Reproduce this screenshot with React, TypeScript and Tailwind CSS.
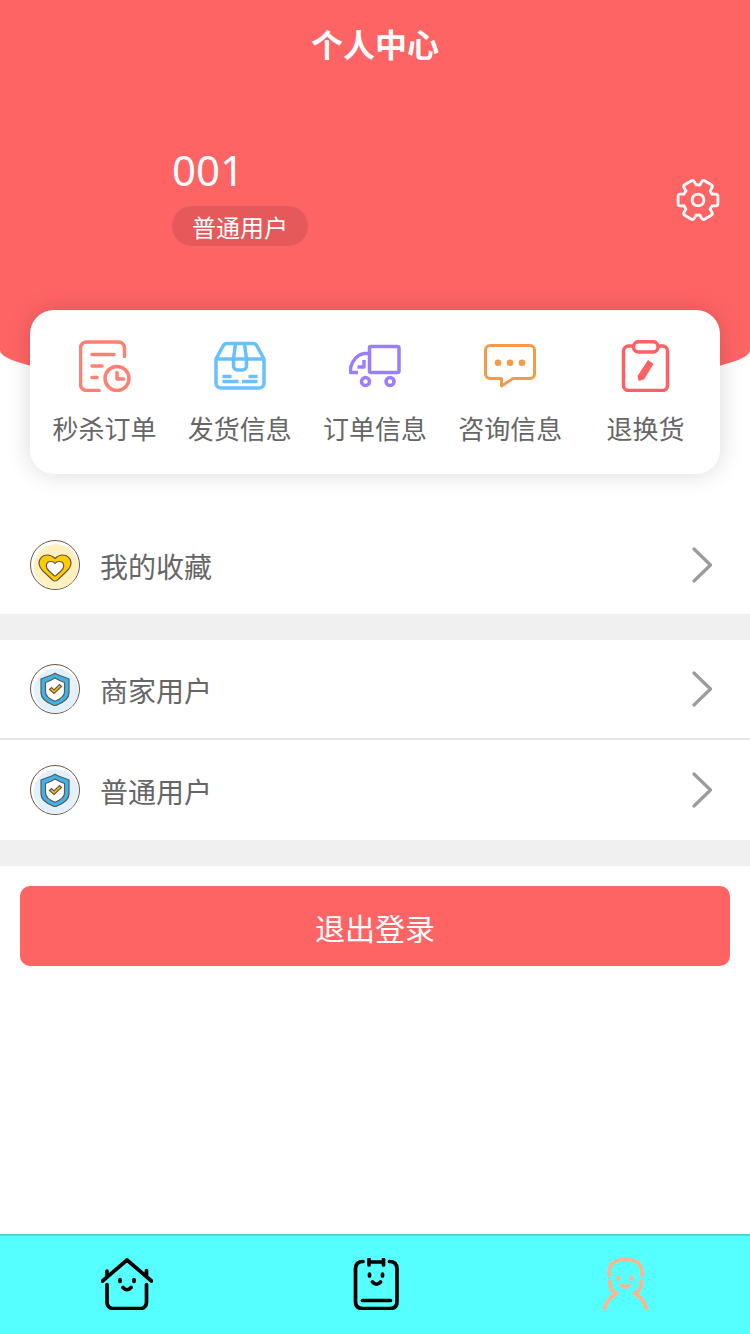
import type { ReactNode } from 'react'

interface Shortcut {
  label: string
  icon: ReactNode
}

const gearAngles = [0, 60, 120, 180, 240, 300]

function GearIcon() {
  return (
    <svg viewBox="-63 -63 126 126" className="h-11 w-11" fill="none" stroke="#fff" strokeWidth="8" strokeLinecap="round" strokeLinejoin="round">
      <circle r="17" />
      {gearAngles.map((angle) => (
        <path key={angle} transform={`rotate(${angle})`} d="M40-17H50Q57-17 57-10V10Q57 17 50 17H40L34.7 26.1" />
      ))}
    </svg>
  )
}

const shortcuts: Shortcut[] = [
  {
    label: '秒杀订单',
    icon: (
      <g stroke="#ff8073">
        <path d="M45.5 16.5V8a6 6 0 0 0-6-6H7.500a6 6 0 0 0-6 6v36.500a6 6 0 0 0 6 6H20" />
        <path d="M13 14.500h22M13 26h10M13 37.500h5M38 32.500v6.500h6.500" />
        <circle cx="38" cy="38.500" r="12" />
      </g>
    ),
  },
  {
    label: '发货信息',
    icon: (
      <g stroke="#69c0ff">
        <path d="M2 19 9 6q1.500-2.500 4-2.500h26q2.500 0 4 2.500l7 13v24a5 5 0 0 1-5 5H7a5 5 0 0 1-5-5zH50" />
        <path d="M21.500 4 19.500 19v7a4 4 0 0 0 4 4h5a4 4 0 0 0 4-4v-7L30.500 4" />
        <path strokeLinecap="butt" d="M8.500 36.500h9M34.500 36.500h9M8.500 41.500h16M28 41.500h15.500" />
      </g>
    ),
  },
  {
    label: '订单信息',
    icon: (
      <g stroke="#9d7dff">
        <rect x="20.500" y="6.500" width="29.500" height="26" rx="1.500" />
        <path strokeLinecap="butt" d="M20 13.500h-5C9 14.500 3 20 1.500 28v4.500H9M15 20v7H8.500" />
        <circle cx="16.500" cy="41.500" r="4" />
        <circle cx="41" cy="41.500" r="4" />
      </g>
    ),
  },
  {
    label: '咨询信息',
    icon: (
      <g stroke="#f59a4a" strokeWidth="3">
        <path d="M6 5.500h40a4.500 4.500 0 0 1 4.500 4.500v24a4.500 4.500 0 0 1-4.500 4.500H29L17.500 46v-7.500H6A4.500 4.500 0 0 1 1.500 34V10A4.500 4.500 0 0 1 6 5.500z" />
        <g fill="#f59a4a" stroke="none">
          <circle cx="14" cy="22.700" r="3.300" />
          <circle cx="26" cy="22.700" r="3.300" />
          <circle cx="38" cy="22.700" r="3.300" />
        </g>
      </g>
    ),
  },
  {
    label: '退换货',
    icon: (
      <g stroke="#ff6063">
        <path d="M13 6H9.500a5 5 0 0 0-5 5v34.500a5 5 0 0 0 5 5h34a5 5 0 0 0 5-5V11a5 5 0 0 0-5-5H40" />
        <rect x="14.500" y="1.700" width="24.500" height="10.300" rx="5" />
        <path fill="#ff6063" stroke="none" d="m29 20 5.500 4-9.500 15.500-5.500 1.500-1-5z" />
      </g>
    ),
  },
]

function HeartIcon() {
  return (
    <svg viewBox="0 0 50 50" className="h-[50px] w-[50px]" stroke="#6b5540">
      <circle cx="25" cy="25" r="24.500" fill="#fff" />
      <circle cx="26" cy="26.500" r="22.300" fill="#fff0c0" stroke="none" />
      <path strokeWidth="1.200" fill="#ffcb05" d="M25 18.500C22.500 16 20 15 17.500 15 12.500 15 9 18.500 9 23c0 3.500 2 6 4.500 8.500l9 8.500q2.500 2 5 0l9-8.500C39 29 41 26.500 41 23c0-4.500-3.500-8-8.500-8-2.500 0-5 1-7.500 3.500z" />
      <path strokeWidth="1.200" fill="#fff" d="M25 23.500C24 22 22.500 21.500 21 21.500c-3 0-4.700 2-4.700 4.500 0 2 1 3.500 2.700 5l5 4.500q1 .800 2 0l5-4.500c1.700-1.500 2.700-3 2.700-5 0-2.500-1.700-4.500-4.700-4.500-1.500 0-3 .500-4 2z" />
    </svg>
  )
}

function ShieldIcon() {
  return (
    <svg viewBox="0 0 50 50" className="h-[50px] w-[50px]" stroke="#6b5540">
      <circle cx="25" cy="25" r="24.500" fill="#fff" />
      <circle cx="26" cy="26.500" r="22.300" fill="#e2f1ff" stroke="none" />
      <path strokeWidth="1.200" fill="#35b5f5" d="M25 9.300q1.500 1.200 6 2.700t8 3V29c0 6-6 9.500-12 12q-2 1-4 0C17 38.500 11 35 11 29V15q3.500-1.500 8-3t6-2.700z" />
      <path strokeWidth="1.200" fill="#fff" d="M25 14q4 2.500 9.500 4.500V28c0 4-4 7-9.500 9.200-5.500-2.200-9.500-5.200-9.500-9.200v-9.500q5.500-2 9.500-4.500z" />
      <path strokeWidth="1.200" fill="#ffc20e" d="m19.500 25.500 2-2 2.500 2.500 5.500-5.500 2 2-7.500 7z" />
    </svg>
  )
}

function Row({ icon, label, className = '' }: { icon: ReactNode; label: string; className?: string }) {
  return (
    <a href="#" className={`flex items-center pr-[38px] pl-[30px] ${className}`}>
      {icon}
      <span className="ml-5 flex-1 pt-1 text-[28px] leading-10 text-[#666]">{label}</span>
      <svg viewBox="0 0 20 36" className="h-9 w-5" fill="none" stroke="#9b9b9b" strokeWidth="3.200" strokeLinecap="round" strokeLinejoin="round">
        <path d="M2 2l16.500 16L2 34" />
      </svg>
    </a>
  )
}

const tabs = [
  {
    label: '首页',
    color: 'text-black',
    viewBox: '0 0 52 52',
    path: 'M1.500 23 26 2l24.500 21M6 13v5M45.500 12.500V18M6 26.500v18a6 6 0 0 0 6 6h27.500a6 6 0 0 0 6-6v-18M19 21.500v2M33 21.500v2M22 29.500q4 4.500 8 0',
  },
  {
    label: '订单',
    color: 'text-black',
    viewBox: '-2 0 52 52',
    path: 'M11 3.500C6 3.500 3.500 6 3.500 11v32.500q0 7 7 7H38q7 0 7-7V11c0-5-2.500-7.500-7.500-7.500M17 1.500v5.500M31.500 1.500v5.500M17 4h14.500M17.500 16v2M30.500 16v2M20.500 24q4 4.500 8 0M10.500 42.500h28',
  },
  {
    label: '我的',
    color: 'text-[#ffb58c]',
    viewBox: '-1 0 52 52',
    path: 'M9 17.500V13C10 4 18 1.500 25.500 1.500S41 4 42 13v4.500M9.500 22.500c0 6 2 11 7 13-6 3-10 8-12 15.500M41.500 22.500c0 6-2 11-7 13 6 3 10 8 12 15.500M18.500 19v2M31.500 19v2M21.500 27q4 4 8 0',
  },
]

export default function App() {
  return (
    <div className="flex min-h-screen flex-col bg-white font-['Noto_Sans','Noto_Sans_CJK_SC',sans-serif]">
      {/* Header */}
      <header className="min-h-[390px] rounded-b-[50%_40px] bg-[#ff6465] text-white">
        <h1 className="pt-5 text-center text-[32px] leading-[50px] font-bold">个人中心</h1>
        <div className="flex items-end justify-between pt-[70px] pr-[30px] pl-[172px]">
          <div>
            <div className="text-[42px] leading-[60px]">001</div>
            <span className="mt-1.5 flex h-10 items-center rounded-full bg-black/10 px-5 pt-1 text-[24px]">普通用户</span>
          </div>
          <button aria-label="设置" className="mb-6">
            <GearIcon />
          </button>
        </div>
      </header>

      {/* Shortcuts */}
      <section className="relative mx-[30px] -mt-20 grid grid-cols-5 rounded-3xl bg-white px-[7px] pt-[30px] pb-6 shadow-[0_0_24px_rgba(0,0,0,0.15)]">
        {shortcuts.map(({ label, icon }) => (
          <a key={label} href="#" className="flex flex-col items-center gap-4">
            <svg viewBox="0 0 52 52" className="h-[52px] w-[52px]" fill="none" strokeWidth="3.500" strokeLinecap="round" strokeLinejoin="round">
              {icon}
            </svg>
            <span className="text-[26px] leading-[42px] text-[#666]">{label}</span>
          </a>
        ))}
      </section>

      {/* Menu */}
      <main className="mt-[42px]">
        <Row icon={<HeartIcon />} label="我的收藏" className="h-[98px]" />
        <div className="border-y-[26px] border-[#f0f0f0]">
          <Row icon={<ShieldIcon />} label="商家用户" className="h-[100px] border-b-2 border-[#e6e6e6]" />
          <Row icon={<ShieldIcon />} label="普通用户" className="h-[100px]" />
        </div>
        <div className="p-5">
          <button className="h-20 w-full rounded-[10px] bg-[#ff6465] pt-1 text-[30px] text-white">退出登录</button>
        </div>
      </main>

      {/* Tab bar */}
      <nav className="mt-auto grid h-[100px] grid-cols-3 border-t-2 border-[#4cd5d8] bg-[#55ffff] pb-0.5 pl-0.5">
        {tabs.map((tab) => (
          <a key={tab.label} href="#" aria-label={tab.label} className={`flex items-center justify-center ${tab.color}`}>
            <svg viewBox={tab.viewBox} className="h-[52px] w-[52px]" fill="none" stroke="currentColor" strokeWidth="3.700" strokeLinecap="round" strokeLinejoin="round">
              <path d={tab.path} />
            </svg>
          </a>
        ))}
      </nav>
    </div>
  )
}
